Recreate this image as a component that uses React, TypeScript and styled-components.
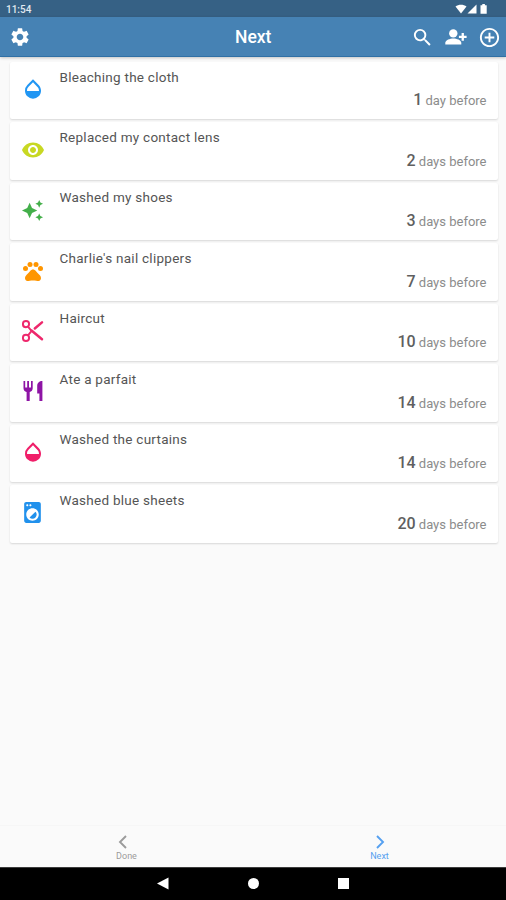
import type { ReactNode } from "react";
import styled, { createGlobalStyle } from "styled-components";
import {
  MdAddCircleOutline,
  MdAutoAwesome,
  MdLocalLaundryService,
  MdOpacity,
  MdPets,
  MdSearch,
  MdSettings,
  MdVisibility,
} from "react-icons/md";

const GlobalStyle = createGlobalStyle`
  * {
    box-sizing: border-box;
  }

  body {
    margin: 0;
    background: rgb(250, 250, 250);
    font-family: Roboto, "Liberation Sans", sans-serif;
  }
`

const Screen = styled.div`
  width: 506px;
  height: 900px;
  display: flex;
  flex-direction: column;
  overflow: hidden;
  background: rgb(250, 250, 250);
`

const StatusBar = styled.div`
  height: 17px;
  flex-shrink: 0;
  display: flex;
  align-items: center;
  justify-content: space-between;
  padding: 1px 17px 0 6px;
  background: rgb(54, 97, 133);
  color: rgb(225, 233, 240);
`

const Clock = styled.span`
  font-size: 10px;
  font-weight: 500;
`

const StatusIcons = styled.svg`
  display: block;
  width: 34px;
  height: 12px;
`

const Header = styled.header`
  height: 40px;
  flex-shrink: 0;
  display: grid;
  grid-template-columns: 1fr auto 1fr;
  align-items: center;
  padding: 1px 5px 0 9px;
  background: rgb(70, 130, 180);
  color: white;
  border-bottom: 1px solid rgb(48, 112, 165);
  box-shadow: 0 1px 3px rgba(0, 0, 0, 0.22);

  svg {
    display: block;
  }
`

const HeaderTitle = styled.h1`
  margin: 0 3.5px 0 0;
  font-size: 17.5px;
  font-weight: 500;
`

const HeaderActions = styled.div`
  display: flex;
  align-items: center;
  justify-content: flex-end;
  gap: 11px;
`

const List = styled.main`
  flex: 1;
  display: flex;
  flex-direction: column;
  gap: 3px;
  padding: 5px 8px 0 9.5px;
`

const Card = styled.div`
  height: 57.45px;
  display: flex;
  background: white;
  border-radius: 2px;
  box-shadow: 0 1px 2px rgba(0, 0, 0, 0.14);
`

const CardIcon = styled.div<{ $color: string }>`
  width: 46px;
  display: flex;
  align-items: center;
  justify-content: center;
  padding-bottom: 3px;
  color: ${({ $color }) => $color};
`

const CardBody = styled.div`
  flex: 1;
  display: flex;
  flex-direction: column;
  justify-content: space-between;
  padding: 5.5px 11.5px 9px 4px;
`

const CardTitle = styled.div`
  font-size: 13.5px;
  line-height: 18px;
  letter-spacing: 0.26px;
  color: rgb(85, 85, 85);
`

const Remaining = styled.div`
  text-align: right;
  font-size: 13px;
  line-height: 18px;
  color: rgb(140, 140, 140);
`

const DayCount = styled.span`
  font-size: 16px;
  font-weight: 500;
  color: rgb(95, 95, 95);
`

const TabBar = styled.nav`
  height: 42px;
  flex-shrink: 0;
  display: grid;
  grid-template-columns: 1fr 1fr;
  border-top: 1px solid rgb(246, 246, 246);
`

const Tab = styled.div<{ $active?: boolean }>`
  display: flex;
  flex-direction: column;
  align-items: center;
  padding-top: 8px;
  font-size: 9px;
  line-height: 12px;
  color: ${({ $active }) => ($active ? "rgb(85, 160, 240)" : "rgb(155, 155, 155)")};
`

const Chevron = styled.svg<{ $shift?: number }>`
  width: 16px;
  height: 16px;
  margin-right: ${({ $shift }) => $shift ?? 0}px;
`

const NavBar = styled.div`
  height: 33px;
  flex-shrink: 0;
  background: black;
  border-top: 1px solid rgb(60, 60, 60);

  svg {
    display: block;
  }
`

const PersonAddIcon = () => (
  <svg width="22" height="22" viewBox="0 0 22 22" fill="currentColor">
    <circle cx="8.3" cy="7.4" r="4.2" />
    <path d="M0.3 18.6v-1.8c0-2.9 4.8-4.4 8-4.4s8 1.5 8 4.4v1.8z" />
    <path d="M16.6 7h2.3v2.7h2.7v2.3h-2.7v2.7h-2.3v-2.7h-2.7V9.7h2.7z" />
  </svg>
)

const ScissorsIcon = () => (
  <svg width="22" height="22" viewBox="0 0 22 22" fill="none" stroke="currentColor" strokeWidth="1.9">
    <circle cx="4" cy="4.1" r="3.1" />
    <circle cx="4" cy="17.9" r="3.1" />
    <path d="M6 6.600 9.500 11 6 15.400" />
    <path d="M12.800 8.500 20 2.400M9.500 10.500 20 19.300" strokeWidth="2.500" strokeLinecap="round" />
  </svg>
)

const ForkKnifeIcon = () => (
  <svg width="20" height="22" viewBox="0 0 20 22" fill="currentColor">
    <path d="M0.500 1h1.700v6.500h2V1h1.800v6.500h2V1h1.700v7.200c0 2-1.200 3.300-3 3.700V21H3.600v-9.100c-1.900-.4-3.100-1.700-3.100-3.700z" />
    <path d="M19.400 1v20h-3v-7.500h-2.200V5.800c0-2.700 2-4.800 5.200-4.800z" />
  </svg>
)

type Entry = {
  title: string;
  days: number;
  color: string;
  icon: ReactNode;
}

const entries: Entry[] = [
  { title: "Bleaching the cloth", days: 1, color: "rgb(33, 150, 243)", icon: <MdOpacity size={24} /> },
  { title: "Replaced my contact lens", days: 2, color: "rgb(200, 216, 35)", icon: <MdVisibility size={24} /> },
  { title: "Washed my shoes", days: 3, color: "rgb(67, 175, 74)", icon: <MdAutoAwesome size={23} /> },
  { title: "Charlie's nail clippers", days: 7, color: "rgb(255, 150, 0)", icon: <MdPets size={24} /> },
  { title: "Haircut", days: 10, color: "rgb(238, 40, 108)", icon: <ScissorsIcon /> },
  { title: "Ate a parfait", days: 14, color: "rgb(142, 20, 165)", icon: <ForkKnifeIcon /> },
  { title: "Washed the curtains", days: 14, color: "rgb(240, 30, 105)", icon: <MdOpacity size={24} /> },
  { title: "Washed blue sheets", days: 20, color: "rgb(33, 145, 236)", icon: <MdLocalLaundryService size={25} /> },
]

const App = () => {
  return (
    <Screen>
      <GlobalStyle />
      <StatusBar>
        <Clock>11:54</Clock>
        <StatusIcons viewBox="0 0 34 12" fill="white">
          <path d="M0.500 3.500C3.500 1 8.500 1 11.500 3.500L6 10.500z" />
          <path d="M21.500 1.500v9h-9z" />
          <path d="M25.500 2.300h1.800V1h2.600v1.300h1.800v8.500h-6.200z" />
        </StatusIcons>
      </StatusBar>
      <Header>
        <MdSettings size={22} />
        <HeaderTitle>Next</HeaderTitle>
        <HeaderActions>
          <MdSearch size={23} />
          <PersonAddIcon />
          <MdAddCircleOutline size={23} />
        </HeaderActions>
      </Header>
      <List>
        {entries.map(({ title, days, color, icon }) => (
          <Card key={title}>
            <CardIcon $color={color}>{icon}</CardIcon>
            <CardBody>
              <CardTitle>{title}</CardTitle>
              <Remaining><DayCount>{days}</DayCount> {days === 1 ? "day" : "days"} before</Remaining>
            </CardBody>
          </Card>
        ))}
      </List>
      <TabBar>
        <Tab>
          <Chevron $shift={7} viewBox="0 0 16 16" fill="none" stroke="currentColor" strokeWidth="1.9">
            <path d="M11 2 5 8l6 6" />
          </Chevron>
          Done
        </Tab>
        <Tab $active>
          <Chevron viewBox="0 0 16 16" fill="none" stroke="currentColor" strokeWidth="1.9">
            <path d="m5 2 6 6-6 6" />
          </Chevron>
          Next
        </Tab>
      </TabBar>
      <NavBar>
        <svg width="506" height="32" viewBox="0 0 506 32" fill="white">
          <path d="M157 15.500 168.500 9.500v12z" />
          <circle cx="253.500" cy="15.500" r="5.500" />
          <rect x="338" y="10" width="11" height="11" />
        </svg>
      </NavBar>
    </Screen>
  )
}

export default App
